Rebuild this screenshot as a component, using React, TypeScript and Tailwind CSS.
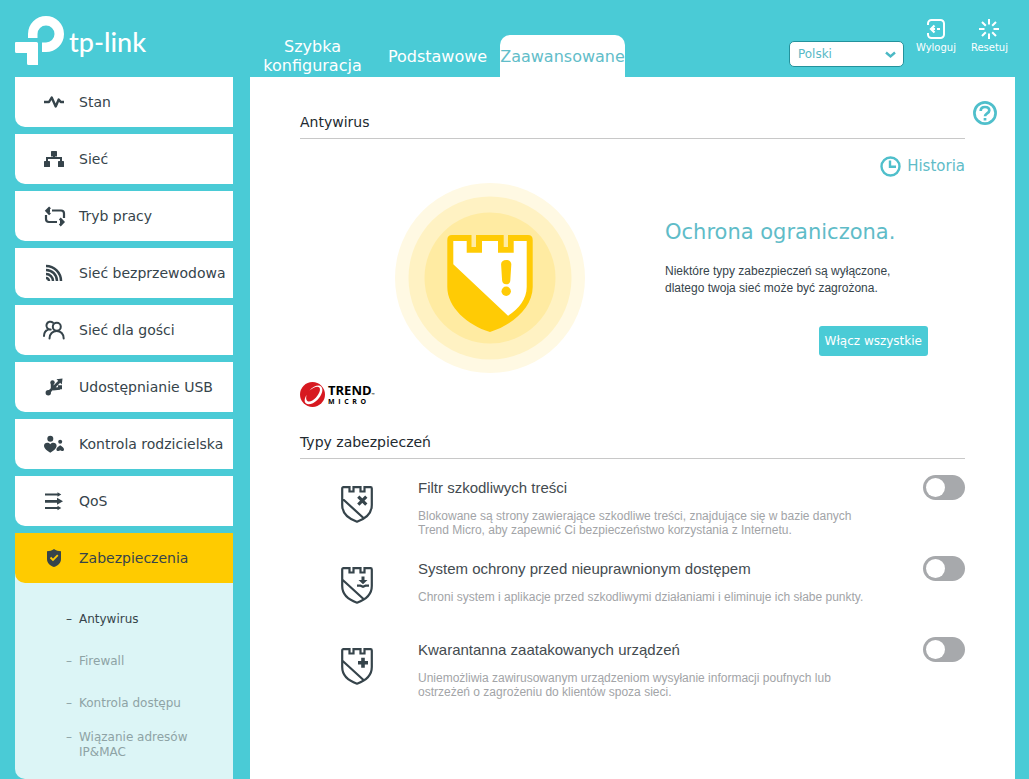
import { useState } from "react";
import type { ReactNode } from "react";
import clsx from "clsx";

interface MenuItem {
  label: string;
  icon: ReactNode;
}

interface Feature {
  id: string;
  title: string;
  description: string;
  glyph: ReactNode;
}

const menu: MenuItem[] = [
  {
    label: "Stan",
    icon: <path d="M0 10h5l2.700-4.500 4 9 3-7 2 2.500H20" fill="none" stroke="currentColor" strokeWidth="2.400" strokeLinejoin="round" />,
  },
  {
    label: "Sieć",
    icon: (
      <>
        <path d="M10 5v5M3 14V9h14v5" fill="none" stroke="currentColor" strokeWidth="2" />
        <rect x="7" y="2" width="6" height="5.500" rx="0.600" fill="currentColor" />
        <rect x="0" y="12" width="6" height="6" rx="0.600" fill="currentColor" />
        <rect x="14" y="12" width="6" height="6" rx="0.600" fill="currentColor" />
      </>
    ),
  },
  {
    label: "Tryb pracy",
    icon: (
      <g fill="none" stroke="currentColor" strokeWidth="2.200">
        <path d="M8 4.500h9a3 3 0 0 1 3 3V12M2 9v4a3 3 0 0 0 3 3h8" />
        <path d="M6 1.300 2.600 4.800 6 8.300M3 4.800h3" strokeWidth="2.600" />
        <path d="m15.800 12.500 3.400 3.500-3.400 3.500M16 16h3" strokeWidth="2.600" />
      </g>
    ),
  },
  {
    label: "Sieć bezprzewodowa",
    icon: (
      <g fill="none" stroke="currentColor" strokeWidth="2.500">
        <path d="M2 3a15 15 0 0 1 15 15M2 7a11 11 0 0 1 11 11M2 11a7 7 0 0 1 7 7M2 15a3 3 0 0 1 3 3" />
      </g>
    ),
  },
  {
    label: "Sieć dla gości",
    icon: (
      <g fill="none" stroke="currentColor" strokeWidth="2" strokeLinecap="round">
        <circle cx="12.800" cy="6.800" r="4" />
        <path d="M5.500 18.500c0-4.500 3.200-7.500 7.200-7.500s7 3 7 7.500" />
        <path d="M9 2.800A3.900 3.900 0 1 0 6.700 9.500M4.500 9.200C1.500 10.300 0 13 0 16" />
      </g>
    ),
  },
  {
    label: "Udostępnianie USB",
    icon: (
      <>
        <path d="m4.500 15.500 11-11M8.200 11.500V6M9 12.200l6-.7 1-2" fill="none" stroke="currentColor" strokeWidth="2.800" />
        <circle cx="4.300" cy="15.700" r="2.700" fill="currentColor" />
        <circle cx="8.500" cy="5.500" r="2.200" fill="currentColor" />
        <path d="M12.500 2.200 18.500 1.500 17.800 7.500zM14 8.200h4v4h-4z" fill="currentColor" />
      </>
    ),
  },
  {
    label: "Kontrola rodzicielska",
    icon: (
      <g fill="currentColor">
        <circle cx="6.300" cy="4.800" r="3" />
        <path d="M6.300 18.800C3.500 17 0 14.800 0 11.800 0 8.700 4 7.700 6.300 10.200 8.600 7.700 12.600 8.700 12.600 11.800c0 3-3.500 5.200-6.300 7z" />
        <circle cx="16.200" cy="7.800" r="2" />
        <path d="M16.200 11.200c2 1.300 3.800 2.600 3.800 4.200 0 1.800-2.400 2.200-3.800.9-1.400 1.300-3.800.9-3.800-.9 0-1.600 1.800-2.900 3.800-4.200z" />
      </g>
    ),
  },
  {
    label: "QoS",
    icon: (
      <>
        <path d="M1 3.500h14M1 17h14" fill="none" stroke="currentColor" strokeWidth="2.200" />
        <path d="M1 8.900h12v2.900H1zM13 6.800l6 3.500-6 3.500zM13.500 1.200l3.800 2.300-3.800 2.300zM13.500 14.700l3.800 2.300-3.800 2.300z" fill="currentColor" />
      </>
    ),
  },
  {
    label: "Zabezpieczenia",
    icon: (
      <>
        <path d="M10 1c2 1.500 4.500 2.200 7 2.300V11c0 4-3 6.700-7 8-4-1.300-7-4-7-8V3.300C5.500 3.200 8 2.500 10 1z" fill="currentColor" />
        <path d="m6.500 9.500 2.500 2.500 4.800-4.800" fill="none" stroke="#ffcb00" strokeWidth="1.800" />
      </>
    ),
  },
];

const submenu = ["Antywirus", "Firewall", "Kontrola dostępu", "Wiązanie adresów IP&MAC"];

const features: Feature[] = [
  {
    id: "filter",
    title: "Filtr szkodliwych treści",
    description:
      "Blokowane są strony zawierające szkodliwe treści, znajdujące się w bazie danych Trend Micro, aby zapewnić Ci bezpieczeństwo korzystania z Internetu.",
    glyph: <path d="m17.300 10.700 8 8m0-8-8 8" fill="none" stroke="currentColor" strokeWidth="3.200" />,
  },
  {
    id: "intrusion",
    title: "System ochrony przed nieuprawnionym dostępem",
    description: "Chroni system i aplikacje przed szkodliwymi działaniami i eliminuje ich słabe punkty.",
    glyph: (
      <>
        <path d="M20.500 9.500h3V13h3L22 17.300 17.500 13h3z" fill="currentColor" />
        <path d="M16 18.700h3.500l2.500 1 2.500-1H28" fill="none" stroke="currentColor" strokeWidth="2.200" />
      </>
    ),
  },
  {
    id: "quarantine",
    title: "Kwarantanna zaatakowanych urządzeń",
    description:
      "Uniemożliwia zawirusowanym urządzeniom wysyłanie informacji poufnych lub ostrzeżeń o zagrożeniu do klientów spoza sieci.",
    glyph: <path d="M22 9.800v10M17 14.800h10" fill="none" stroke="currentColor" strokeWidth="3.600" />,
  },
];

function Logo() {
  return (
    <a href="#" className="flex items-start pt-4 w-[235px] shrink-0 text-white">
      <svg width="49" height="49" viewBox="0 0 49 49" fill="currentColor" aria-hidden="true">
        <path d="M13 22v-4A18 18 0 1 1 31 36h-4V26.500h4A8.500 8.500 0 1 0 22.500 18v4z" />
        <path d="M1 26h20.500q1.500 0 1.500 1.500V49H13.500Q12 49 12 47.500V37H1.500Q0 37 0 35.500V27q0-1 1-1z" />
      </svg>
      <span className="pl-[5px] pt-2.5 font-['Lato',sans-serif] font-medium text-[27px] leading-8">tp-link</span>
    </a>
  );
}

function Header() {
  return (
    <header className="flex h-[77px] pl-[15px] pr-[21px]">
      <Logo />
      <nav className="flex items-end text-base leading-[19px] text-white text-center">
        <a href="#" className="flex items-center justify-center w-[125px] h-[42px]">Szybka konfiguracja</a>
        <a href="#" className="flex items-center justify-center w-[125px] h-[42px]">Podstawowe</a>
        <a href="#" aria-current="page" className="flex items-center justify-center w-[125px] h-[42px] rounded-t-[10px] bg-white text-[#62bdc9]">
          Zaawansowane
        </a>
      </nav>
      <div className="flex items-start ml-auto text-white">
        <div className="relative mt-[41px] mr-3">
          <select
            aria-label="Język"
            defaultValue="pl"
            className="block appearance-none w-[115px] h-[26px] pl-2 pb-px rounded-[5px] border border-[#23929c] bg-white text-xs text-[#57b9c6]"
          >
            <option value="pl">Polski</option>
            <option value="en">English</option>
          </select>
          <svg className="absolute right-2 top-2.5 pointer-events-none" width="11" height="8" viewBox="0 0 11 8" aria-hidden="true">
            <path d="m1 1.500 4.500 4 4.500-4" fill="none" stroke="#4bb8c4" strokeWidth="2.400" />
          </svg>
        </div>
        <button type="button" className="flex flex-col items-center gap-[3px] mt-[19px] mr-[15px] text-[10px] leading-3">
          <svg width="20" height="20" viewBox="0 0 20 20" fill="none" stroke="currentColor" strokeWidth="2" aria-hidden="true">
            <path d="M2 6V4.500A3.500 3.500 0 0 1 5.500 1h9A3.500 3.500 0 0 1 18 4.500v11a3.500 3.500 0 0 1-3.500 3.500h-9A3.500 3.500 0 0 1 2 15.500V14" />
            <path d="M8.500 6.500 5 10l3.500 3.500M5 10h4M11 10h3" strokeWidth="2.200" />
          </svg>
          Wyloguj
        </button>
        <button type="button" className="flex flex-col items-center gap-[3px] mt-[19px] text-[10px] leading-3">
          <svg width="20" height="20" viewBox="0 0 20 20" fill="none" stroke="currentColor" strokeWidth="2" aria-hidden="true">
            <path d="M10 0v5.500M10 14.500V20M0 10h5.500M14.500 10H20M3 3l3.800 3.800M13.200 13.200 17 17M17 3l-3.800 3.800M6.800 13.200 3 17" />
          </svg>
          Resetuj
        </button>
      </div>
    </header>
  );
}

function Sidebar() {
  return (
    <nav className="w-[218px] shrink-0">
      <ul className="flex flex-col gap-[7px] text-sm text-[#36444b]">
        {menu.map((item) => {
          const active = item.label === "Zabezpieczenia";
          return (
            <li key={item.label} className={clsx(active && "rounded-bl-[10px] bg-[#dcf5f6]")}>
              <a
                href="#"
                className={clsx(
                  "flex items-center gap-[15px] h-[50px] pl-[29px] rounded-bl-[10px] whitespace-nowrap",
                  active ? "bg-[#ffcb00]" : "bg-white"
                )}
              >
                <svg width="20" height="20" viewBox="0 0 20 20" className="shrink-0 overflow-visible" aria-hidden="true">
                  {item.icon}
                </svg>
                {item.label}
              </a>
              {active && (
                <ul className="pt-[15px] pb-[13px] pl-[51px] pr-8 text-xs leading-[15px]">
                  {submenu.map((label) => (
                    <li key={label} className="flex items-center h-[42px]">
                      <a
                        href="#"
                        className={clsx("flex gap-[7px]", label === "Antywirus" ? "text-[#36444b]" : "text-[#8ea3a5]")}
                      >
                        <span aria-hidden="true">–</span>
                        <span>{label}</span>
                      </a>
                    </li>
                  ))}
                </ul>
              )}
            </li>
          );
        })}
      </ul>
    </nav>
  );
}

function StatusShield() {
  return (
    <svg width="190" height="190" viewBox="0 0 190 190" role="img" aria-label="Ochrona ograniczona">
      <circle cx="95" cy="95" r="95" fill="#fff9e3" />
      <circle cx="95" cy="95" r="81.500" fill="#fff2c3" />
      <circle cx="95" cy="95" r="65.500" fill="#ffeba2" />
      <path
        d="M57 52H76.500V64H81V52h27.700V64H113V52h20q4.700 0 4.700 5v47c0 20-19.700 38-42.700 45-23-7-42.700-25-42.700-45V57q0-5 4.700-5z"
        fill="#ffcb05"
      />
      <path d="M58.300 58h13.400v11.700H87V58h16v11.700h15.700V58h13V104c0 12-7.700 22-18.700 28.700L58.300 81.300z" fill="#fff" />
      <path d="M111.200 77c3.200 0 5.300 2 5.100 4.500l-1 16c-.2 2.300-1.600 3.800-4.100 3.800s-3.900-1.500-4.100-3.800l-1-16c-.2-2.500 1.900-4.500 5.100-4.500z" fill="#ffcb05" />
      <circle cx="111.200" cy="108.300" r="4.700" fill="#ffcb05" />
    </svg>
  );
}

function TrendMicro() {
  return (
    <div className="flex items-center gap-[3px] mt-[9px] h-[25px] font-['Open_Sans',sans-serif] font-bold text-black">
      <svg width="25" height="25" viewBox="0 0 25 25" aria-hidden="true">
        <circle cx="12.500" cy="12.500" r="12.500" fill="#d71920" />
        <path
          d="M9.500 8.500C13.500 4 19 2.300 21.300 4.700c2.500 2.700.5 8.800-4 13.300-4 4-9.300 5.500-11.500 3.300-1.800-1.800-1.300-5 .7-8.300-.7 3.200-.4 5 .8 5.900 2 1.400 5.500 0 8.500-3.200 3.500-3.700 5.200-8.200 3.500-10.200-1.600-1.800-5.500-.6-9.800 3z"
          fill="#fff"
        />
      </svg>
      <div className="flex flex-col">
        <span className="text-[13px] leading-[14px]">TREND</span>
        <span className="text-[7px] leading-[9px] whitespace-pre">M  I  C  R  O</span>
      </div>
      <span className="-ml-[3px] text-[4px] leading-[5px]">™</span>
    </div>
  );
}

function FeatureRow({ feature }: { feature: Feature }) {
  const [enabled, setEnabled] = useState(false);

  return (
    <li className="flex items-start min-h-[81px] font-['Liberation_Sans',Arial,sans-serif]">
      <div className="w-[118px] shrink-0 pl-[41px] pt-[11px] text-[#36444b]">
        <svg width="32" height="37" viewBox="0 0 32 37" aria-hidden="true">
          <path
            d="M2.500 1.200H8.500V5.500h4V1.200h7V5.500h4V1.200h6q1.300 0 1.300 1.300V19c0 9-7 14-14.800 16.700C8.200 33 1.200 28 1.200 19V2.500q0-1.300 1.300-1.300zM1.200 12.500 22.500 32"
            fill="none"
            stroke="currentColor"
            strokeWidth="2.200"
          />
          {feature.glyph}
        </svg>
      </div>
      <div className="flex-1 pt-1">
        <label htmlFor={feature.id} className="block text-[15px] leading-[18px] text-[#444b50]">
          {feature.title}
        </label>
        <p className="mt-3 max-w-[455px] text-xs leading-[14px] text-[#a2a4a7]">{feature.description}</p>
      </div>
      <input
        id={feature.id}
        type="checkbox"
        role="switch"
        checked={enabled}
        onChange={(e) => setEnabled(e.target.checked)}
        className="appearance-none flex items-center shrink-0 w-[42px] h-[25px] px-[3px] rounded-full bg-[#a7a9ac] cursor-pointer before:block before:size-[19px] before:rounded-full before:bg-white checked:justify-end checked:bg-[#4acbd6]"
      />
    </li>
  );
}

export default function App() {
  return (
    <div className="flex flex-col min-h-screen bg-[#4acbd6] font-['DejaVu_Sans',Verdana,sans-serif]">
      <Header />
      <div className="flex flex-1 gap-[17px] pl-[15px] pr-3.5">
        <Sidebar />
        <main className="flex flex-1 pl-[50px] bg-white">
          <div className="flex-1 pt-9">
            <h1 className="pb-[7px] border-b border-[#c8c8c8] text-sm leading-[18px] text-[#222a30]">Antywirus</h1>
            <div className="flex justify-end pt-4">
              <a href="#" className="flex items-center gap-1.5 text-[15px] leading-[22px] text-[#5fbcc8]">
                <svg width="21" height="21" viewBox="0 0 21 21" fill="none" stroke="#4fbfcb" strokeWidth="2.400" aria-hidden="true">
                  <circle cx="10.500" cy="10.500" r="9" />
                  <path d="M10 4.500V10.800H16" />
                </svg>
                Historia
              </a>
            </div>
            <section className="flex pt-1.5">
              <div className="flex flex-1 justify-end pr-20">
                <StatusShield />
              </div>
              <div className="flex flex-col w-[300px] pt-[35px] pr-[37px]">
                <h2 className="text-[21px] leading-7 text-[#5fbcc8] whitespace-nowrap">Ochrona ograniczona.</h2>
                <p className="mt-[17px] font-['Liberation_Sans',Arial,sans-serif] text-xs leading-[17px] text-[#36444b]">
                  Niektóre typy zabezpieczeń są wyłączone, dlatego twoja sieć może być zagrożona.
                </p>
                <button type="button" className="self-end mt-[29px] h-[30px] px-1.5 rounded-[3px] bg-[#4acbd6] text-xs text-white whitespace-nowrap">
                  Włącz wszystkie
                </button>
              </div>
            </section>
            <TrendMicro />
            <h2 className="mt-[26px] pb-[7px] border-b border-[#c8c8c8] text-sm leading-[18px] text-[#222a30]">Typy zabezpieczeń</h2>
            <ul className="pt-4">
              {features.map((feature) => (
                <FeatureRow key={feature.id} feature={feature} />
              ))}
            </ul>
          </div>
          <div className="w-[50px] shrink-0 pl-2 pt-6">
            <button type="button" aria-label="Pomoc" className="block text-[#4fbfcb]">
              <svg width="24" height="24" viewBox="0 0 24 24" fill="none" stroke="currentColor" strokeWidth="2.700" aria-hidden="true">
                <circle cx="12" cy="12" r="10.600" />
                <path d="M7.700 10C7.700 7.500 9.500 6 12 6s4.300 1.300 4.300 3.500c0 2.900-4.300 2.900-4.300 5.700M12 16.900v2.600" />
              </svg>
            </button>
          </div>
        </main>
      </div>
    </div>
  );
}
